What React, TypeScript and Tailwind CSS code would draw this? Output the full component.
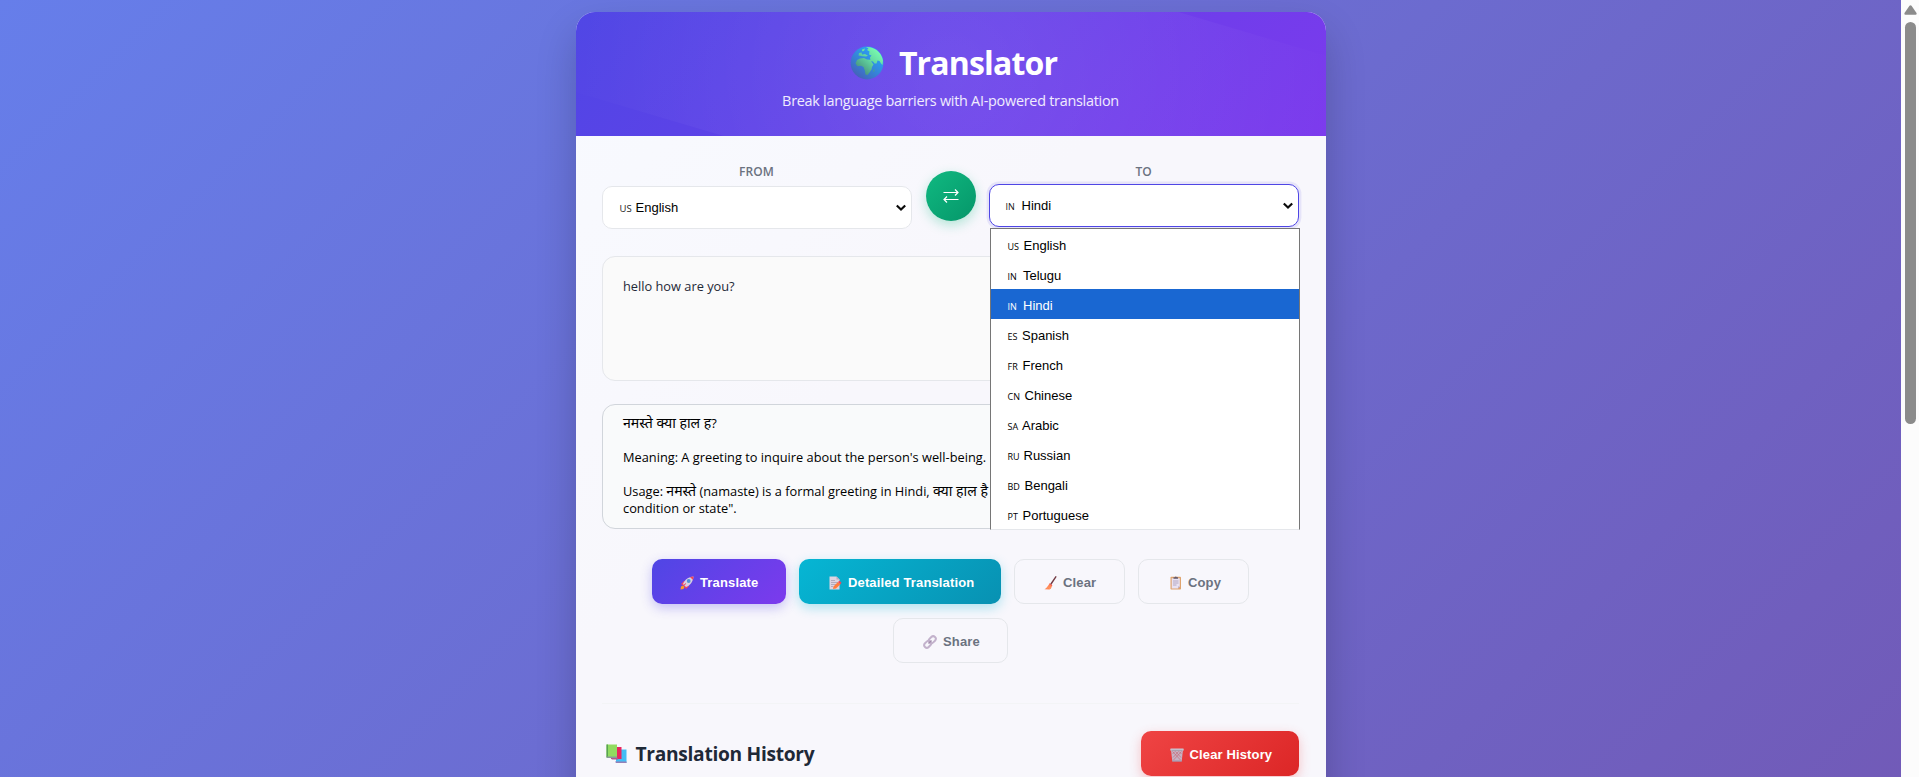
import React from "react";

const SEGOE = "font-['Open_Sans','Noto_Sans',sans-serif]";
const ARIAL = "font-['Liberation_Sans',Arial,sans-serif]";

type Lang = { code: string; name: string; width: string };

const LANGS: Lang[] = [
  { code: "US", name: "English", width: "w-[16px]" },
  { code: "IN", name: "Telugu", width: "w-[15.500px]" },
  { code: "IN", name: "Hindi", width: "w-[15.500px]" },
  { code: "ES", name: "Spanish", width: "w-[14.500px]" },
  { code: "FR", name: "French", width: "w-[15px]" },
  { code: "CN", name: "Chinese", width: "w-[17px]" },
  { code: "SA", name: "Arabic", width: "w-[14.500px]" },
  { code: "RU", name: "Russian", width: "w-[16px]" },
  { code: "BD", name: "Bengali", width: "w-[17px]" },
  { code: "PT", name: "Portuguese", width: "w-[15px]" },
];

function Globe() {
  return (
    <svg width="34" height="34" viewBox="0 0 34 34">
      <defs>
        <linearGradient id="sea" x1="0.9" y1="0.1" x2="0.2" y2="0.95">
          <stop offset="0" stopColor="#27a9ff" />
          <stop offset="0.5" stopColor="#3389dc" />
          <stop offset="1" stopColor="#4560b8" />
        </linearGradient>
        <linearGradient id="land" x1="0.9" y1="0.1" x2="0.2" y2="0.9">
          <stop offset="0" stopColor="#7dffb2" />
          <stop offset="0.5" stopColor="#62d6a0" />
          <stop offset="1" stopColor="#47917f" />
        </linearGradient>
      </defs>
      <circle cx="17" cy="17" r="16.4" fill="url(#sea)" />
      <path
        fill="url(#land)"
        d="M16 1 20 1.200C27 2.600 32 8 33 14.500L32.500 19 31 17.500 29.500 15 27.500 14.500 26.500 17.500 24.500 17.500 23 15.500 20.500 15 20 11.500 21.500 9.500 19 8.500 19.500 5.500 17 4 18.500 2.500ZM5.500 17.500 7 14 10 12.500 14 12 17 13.500 20 13.800 22 16.500 23.500 18.500 22 21 21.500 23.500 19.500 26.500 17.500 29 15.500 28.500 14.800 24.500 13.500 21 11 19.800 7.500 20.300ZM8.500 9.500 9 7 11.500 6.500 12 8.500 15 8 18 9.800 16 10.500 12.500 10.300ZM12 3.500 15 2.500 14 5 12 5.300Z"
      />
      <path d="M23.500 24 24.700 23 24.300 25.500 23.300 26Z" fill="#47a58a" />
    </svg>
  );
}

function Rocket() {
  return (
    <svg width="14" height="14" viewBox="0 0 14 14">
      <path d="M1 8 4 5 7 6 4 10ZM6 13 9 10 8 7 4 10Z" fill="#f9405c" />
      <path d="M3 8C5 3 9 1 13.500 0.500 13 5 11 9 6 11Z" fill="#d9cfe2" />
      <path d="M10 0.900 13.500 0.500 13.100 4Z" fill="#f64553" />
      <circle cx="8.700" cy="5" r="1.900" fill="#5192d8" />
      <path d="M3.500 9.500 6 7.500" stroke="#f64553" strokeWidth="1" />
      <path d="M0.500 13.500 1 10.500 3 9.500 4.500 11 3.500 13Z" fill="#ff9a25" />
    </svg>
  );
}

function Memo() {
  return (
    <svg width="13" height="14" viewBox="0 0 13 14">
      <path d="M0.500 0.500H7.500L10.500 3.500V13.500H0.500Z" fill="#dcd5e2" />
      <path d="M7.500 0.500V3.500H10.500Z" fill="#b5aabf" />
      <path d="M2 4.500H6M2 6.500H9M2 8.500H7M2 10.500H4" stroke="#a99fb4" strokeWidth="0.800" />
      <path d="M4 13 4.500 10.500 9 6 11.500 8.200 7 12.500Z" fill="#ff7d3c" />
      <path d="M9 6 10.500 4.800 12.500 6.800 11.500 8.200Z" fill="#f0455e" />
    </svg>
  );
}

function Broom() {
  return (
    <svg width="13" height="14" viewBox="0 0 13 14">
      <path d="M11.800 0.800 7 8" stroke="#743c45" strokeWidth="1.400" strokeLinecap="round" />
      <path d="M5.500 7.500 8.200 9.200 7 12.500 5.500 13.500 0.500 13.200C2.800 12 4 10 5.500 7.500Z" fill="#ff8355" />
      <path d="M5.500 7.800 8.200 9.500" stroke="#e8454f" strokeWidth="0.800" />
      <path d="M3 12.700 5 10.500M5 13 6.500 10.900" stroke="#ffb06a" strokeWidth="0.600" />
    </svg>
  );
}

function Clipboard() {
  return (
    <svg width="12" height="14" viewBox="0 0 12 14">
      <rect x="0.500" y="0.800" width="10.500" height="12.700" rx="0.800" fill="#dfa36e" />
      <path d="M1.700 2.300H9.800V10.500L8 12.400H1.700Z" fill="#e9e2f2" />
      <path d="M8 12.400V10.500H9.800Z" fill="#b9aac9" />
      <path d="M3.500 2.800V1.300H4.800Q5.800-0.400 6.800 1.300H8V2.800Z" fill="#635b70" />
      <path d="M3 5H8.500M3 7H8.500M3 9H6.500" stroke="#a69bb6" strokeWidth="0.800" />
    </svg>
  );
}

function Link() {
  return (
    <svg width="14" height="14" viewBox="0 0 14 14" fill="none" stroke="#c3b2cc" strokeWidth="2">
      <rect x="-3.800" y="-2.600" width="7.600" height="5.200" rx="2.600" transform="translate(9.300 4.700) rotate(-45)" />
      <rect x="-3.800" y="-2.600" width="7.600" height="5.200" rx="2.600" transform="translate(4.700 9.300) rotate(-45)" />
      <path d="M5.500 8.500 8.500 5.500" stroke="#a18cab" strokeWidth="1.200" />
    </svg>
  );
}

function Bin() {
  return (
    <svg width="14" height="14" viewBox="0 0 14 14">
      <path d="M1 2H13L11.700 13H2.300Z" fill="#c6b3c4" />
      <path d="M2.500 3.500 10.500 12M5.500 3.500 11 9.500M9 3.500 11.500 6M11.500 3.500 3.500 12M8.500 3.500 3 9.500M5 3.500 2.500 6" stroke="#c9606c" strokeWidth="0.600" />
      <rect x="0.300" y="0.500" width="13.400" height="2.200" rx="0.600" fill="#c9c3cf" />
      <path d="M1.500 2.400H12.500" stroke="#8f8796" strokeWidth="0.600" />
      <path d="M2.200 12.300H11.800V13.700H2.200Z" fill="#a799b0" />
    </svg>
  );
}

function Books() {
  return (
    <svg width="21" height="20" viewBox="0 0 21 20">
      <rect x="10" y="5.500" width="10.500" height="13.500" fill="#43bdf5" />
      <path d="M9 17.500H20.500V19H10Z" fill="#9580b8" />
      <rect x="5" y="3" width="10.500" height="12" fill="#e8265f" />
      <path d="M4.500 13.700H12V15.500H6Z" fill="#ad5b8c" />
      <rect x="0.500" y="0.500" width="10.500" height="13" fill="#91dc60" />
      <rect x="0.500" y="0.500" width="1.500" height="13" fill="#59a252" />
      <path d="M0.500 12.500H11V14H1Z" fill="#8a9a9a" />
    </svg>
  );
}

function Chevron() {
  return (
    <svg width="12" height="8" viewBox="0 0 12 8" fill="none" stroke="#0b0b0b" strokeWidth="2.200">
      <path d="M1.800 1.500 6 5.500 10.200 1.500" />
    </svg>
  );
}

function SelectBox({ code, name, active }: { code: string; name: string; active?: boolean }) {
  return (
    <div
      className={
        active
          ? "relative -top-[2px] flex h-[43px] w-full items-center justify-between rounded-[10px] border border-[#4f46e5] bg-white pr-[4px] pl-[16px] shadow-[0_0_0_2.400px_rgba(79,70,229,0.1)]"
          : "flex h-[43px] w-full items-center justify-between rounded-[10px] border border-[#e5e7eb] bg-white pr-[4px] pl-[17px]"
      }
    >
      <span className={`flex items-baseline text-[13px] text-black ${ARIAL}`}>
        <span
          className={`leading-none ${SEGOE} ${active ? "w-[16px] text-[9px] font-medium text-[#111]" : "w-[16px] text-[9.500px] text-[#222]"}`}
        >
          {code}
        </span>
        <span>{name}</span>
      </span>
      <Chevron />
    </div>
  );
}

const GHOST = "border border-[#e5e7eb] text-[#6b7280]";

function ActionButton({ icon, label, look }: { icon: React.ReactNode; label: string; look: string }) {
  return (
    <button className={`flex h-[45px] shrink-0 items-center rounded-[10px] pt-[2px] text-[13px] font-bold ${ARIAL} ${look}`}>
      {icon}
      <span className="ml-[6px] tracking-[0.140px] whitespace-nowrap">{label}</span>
    </button>
  );
}

function Hindi({ children }: { children: string }) {
  return <span className="text-[14.100px]">{children}</span>;
}

export default function App() {
  return (
    <div className={`flex h-[777px] w-full overflow-hidden ${SEGOE}`}>
      <main className="h-[1950px] flex-1 bg-[linear-gradient(135deg,#667eea_0%,#764ba2_100%)] pt-[12px]">
        <div className="mx-auto h-[1400px] w-[750px] overflow-hidden rounded-[19px] bg-[linear-gradient(135deg,#f8faff_0%,#f8f7fc_30%,#f8f7fc_100%)] shadow-[0_20px_40px_rgba(0,0,0,0.2)]">
          <header className="relative flex h-[124px] flex-col items-center overflow-hidden bg-[linear-gradient(135deg,#4f46e5_0%,#7c3aed_100%)] text-white">
            <div className="absolute -top-[62px] -left-[375px] h-[248px] w-[1500px] rotate-[16.500deg] bg-[radial-gradient(circle,rgba(255,255,255,0.09)_0px,transparent_400px)]" />
            <h1 className="relative mt-[29px] flex h-[44px] items-center pl-[6px] text-[32px] leading-[44px] font-bold">
              <Globe />
              <span className="ml-[15px] tracking-[-0.850px]">Translator</span>
            </h1>
            <p className="relative mt-[6px] text-[14.400px] leading-[20px] tracking-[-0.260px] whitespace-nowrap text-white/90">
              Break language barriers with AI-powered translation
            </p>
          </header>

          <div className="pt-[28px] pr-[27px] pl-[26px]">
            <section className="flex">
              <div className="flex w-[310px] flex-col items-center">
                <span className="h-[22px] text-[12px] leading-[16px] font-semibold tracking-[0.100px] text-[#6b7280]">FROM</span>
                <SelectBox code="US" name="English" />
              </div>
              <button className="mt-[7px] mr-[13px] ml-[14px] flex size-[50px] shrink-0 items-center justify-center rounded-full bg-[linear-gradient(135deg,#10b981,#059669)] shadow-[0_4px_12px_rgba(16,185,129,0.3)]">
                <svg width="16" height="14" viewBox="0 0 16 14" fill="none" stroke="white" strokeWidth="1.200">
                  <path d="M0.500 3.500H15M12 0.500 15 3.500 12 6.500M15.500 10.500H1M4 7.500 1 10.500 4 13.500" />
                </svg>
              </button>
              <div className="relative flex w-[310px] flex-col items-center">
                <span className="h-[22px] text-[12px] leading-[16px] font-semibold text-[#6b7280]">TO</span>
                <SelectBox code="IN" name="Hindi" active />
                <ul className={`absolute top-[64px] left-[1px] z-10 w-[310px] border-x border-t border-b border-[#767676] border-b-[#e5e7eb] bg-white text-[13px] text-black ${ARIAL}`}>
                  {LANGS.map((l) => (
                    <li
                      key={l.name}
                      className={`flex h-[30px] items-center pt-[3px] pl-[17px] ${l.name === "Hindi" ? "bg-[#1967d2] text-white" : ""}`}
                    >
                      <span className="flex items-baseline">
                        <span className={`text-[9px] leading-none font-medium ${l.width} ${SEGOE}`}>{l.code}</span>
                        <span>{l.name}</span>
                      </span>
                    </li>
                  ))}
                </ul>
              </div>
            </section>

            <div className="mt-[27px] h-[125px] rounded-[13px] border border-[#e5e7eb] bg-[#fafafa] px-[20.500px] pt-[19px] text-[12.800px] leading-[20px] text-[#1f2937]">
              hello how are you?
            </div>
            <div className="mt-[23px] h-[125px] overflow-hidden rounded-[13px] border border-[#d1d5db] bg-[#f9fafb] px-[20.500px] pt-[9px] text-[12.800px] text-black">
              <p className="h-[35px] leading-[17px] whitespace-pre">
                <Hindi>नमस्ते क्या हाल ह</Hindi>?
              </p>
              <p className="h-[33px] leading-[17px] whitespace-pre">Meaning: A greeting to inquire about the person's well-being.</p>
              <p className="h-[18px] leading-[17px] whitespace-pre">
                Usage: <Hindi>नमस्ते</Hindi> (namaste) is a formal greeting in Hindi, <Hindi>क्या हाल है</Hindi>
              </p>
              <p className="h-[17px] leading-[17px]">condition or state".</p>
            </div>

            <section className="mt-[30px] -mr-[1px] flex flex-wrap justify-center gap-x-[13px] gap-y-[14px]">
              <ActionButton icon={<Rocket />} label="Translate" look="w-[134px] pl-[28px] text-white bg-[linear-gradient(135deg,#4f46e5,#7c3aed)] shadow-[0_4px_12px_rgba(79,70,229,0.3)]" />
              <ActionButton icon={<Memo />} label="Detailed Translation" look="w-[202px] pl-[30px] text-white bg-[linear-gradient(135deg,#06b6d4,#0891b2)] shadow-[0_4px_12px_rgba(6,182,212,0.3)]" />
              <ActionButton icon={<Broom />} label="Clear" look={`w-[111px] pl-[29px] ${GHOST}`} />
              <ActionButton icon={<Clipboard />} label="Copy" look={`w-[111px] pl-[31px] ${GHOST}`} />
              <ActionButton icon={<Link />} label="Share" look={`w-[115px] pl-[29px] ${GHOST}`} />
            </section>

            <section className="mt-[40px] flex items-start justify-between border-t border-[#f3f4f6] pt-[27px]">
              <h2 className="flex h-[46px] items-center pl-[4px] text-[19.200px] font-bold text-[#1f2937]">
                <Books />
                <span className="ml-[9px] tracking-[-0.300px]">Translation History</span>
              </h2>
              <ActionButton icon={<Bin />} label="Clear History" look="w-[158px] pl-[29px] text-white bg-[linear-gradient(135deg,#ef4444,#dc2626)] shadow-[0_4px_12px_rgba(239,68,68,0.3)]" />
            </section>
          </div>
        </div>
      </main>

      <aside className="flex h-[777px] w-[18px] shrink-0 flex-col items-center bg-[#fcfcfc] pt-[5px]">
        <svg width="13" height="10" viewBox="0 0 13 10">
          <path d="M5.500 0.800Q6.500-0.400 7.500 0.800L12.500 8Q13 9.700 11.500 9.700H1.500Q0 9.700 0.500 8Z" fill="#8b8b8b" />
        </svg>
        <div className="mt-[7px] h-[402px] w-[11px] rounded-full bg-[#8b8b8b]" />
      </aside>
    </div>
  );
}
